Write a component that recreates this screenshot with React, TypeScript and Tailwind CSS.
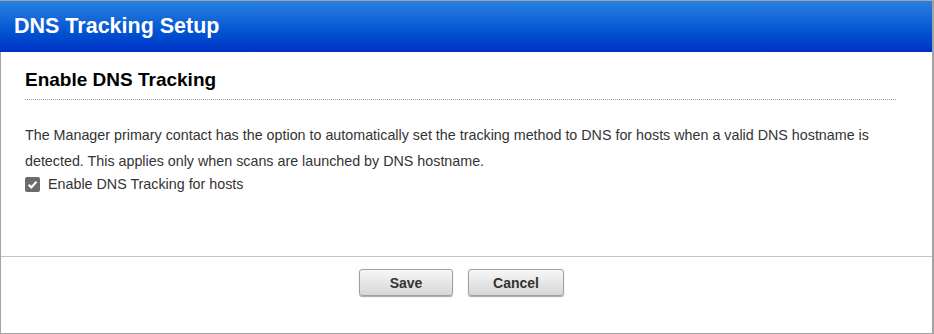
import React, { useState } from 'react';

const App: React.FC = () => {
  const [enabled, setEnabled] = useState(true);

  return (
    <div
      className="w-[934px] h-[334px] bg-white border-t border-l border-b border-r-2 border-[#a3a3a3] flex flex-col"
      style={{ fontFamily: '"Liberation Sans", Arial, sans-serif' }}
    >
      {/* header */}
      <div className="h-[51px] -ml-px flex items-center pl-[14px] bg-gradient-to-b from-[#2a80e0] to-[#0030c6]">
        <h1 className="text-[21.5px] font-bold text-white">DNS Tracking Setup</h1>
      </div>

      {/* body */}
      <div className="flex-1 px-[24px] pt-[16px]">
        <h2 className="text-[19px] font-bold text-black leading-[23px] pb-[8px] border-b border-dotted border-[#999] mr-[12px]">
          Enable DNS Tracking
        </h2>
        <p className="mt-[22px] text-[14.3px] leading-[26px] text-[#333]">
          The Manager primary contact has the option to automatically set the tracking method to DNS for hosts when a valid DNS hostname is
          <br />
          detected. This applies only when scans are launched by DNS hostname.
        </p>
        <label className="flex items-center gap-[8px] text-[14.3px] text-[#333] leading-[20px] cursor-pointer">
          <span
            onClick={() => setEnabled(!enabled)}
            className="w-[15px] h-[15px] rounded-[2px] bg-[#6b6b6b] flex items-center justify-center"
          >
            {enabled && (
              <svg width="11" height="11" viewBox="0 0 10 10">
                <path d="M1.5 5.2 L4 7.6 L8.6 2.4" fill="none" stroke="white" strokeWidth="2" />
              </svg>
            )}
          </span>
          Enable DNS Tracking for hosts
        </label>
      </div>

      {/* footer */}
      <div className="h-[77px] border-t border-[#c4c4c4] flex justify-center gap-[15px] pt-[12px] pr-[10px]">
        <button className="w-[94px] h-[27px] pt-[2px] rounded-[3px] border border-[#a0a0a0] bg-gradient-to-b from-[#f7f7f7] to-[#d6d6d6] shadow-[0_1px_1px_rgba(0,0,0,0.35)] text-[14px] font-bold text-[#333]">
          Save
        </button>
        <button className="w-[96px] h-[27px] pt-[2px] rounded-[3px] border border-[#a0a0a0] bg-gradient-to-b from-[#f7f7f7] to-[#d6d6d6] shadow-[0_1px_1px_rgba(0,0,0,0.35)] text-[14px] font-bold text-[#333]">
          Cancel
        </button>
      </div>
    </div>
  );
};

export default App;
